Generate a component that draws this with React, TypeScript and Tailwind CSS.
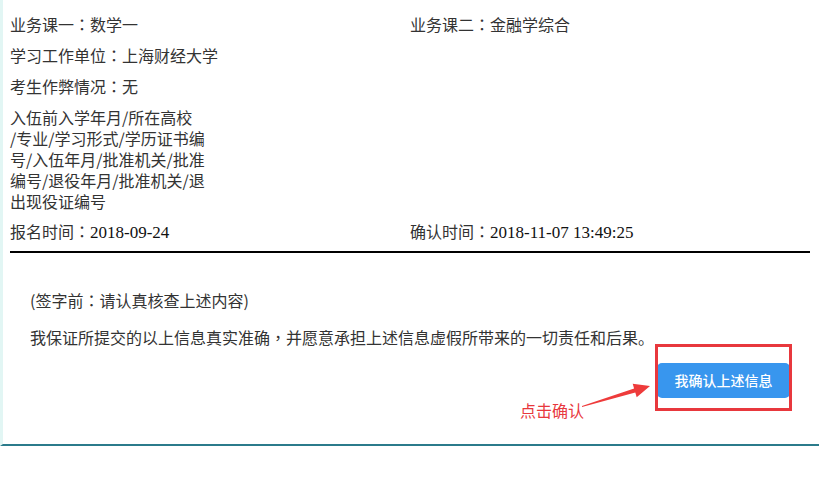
const cjk = { fontFamily: '"Noto Sans CJK SC", "Noto Sans", sans-serif' }

// full-width punctuation centred in its cell, as in the reference
const P = ({ children }: { children: React.ReactNode }) => (
    <span style={{ fontFamily: '"Noto Sans CJK TC", sans-serif' }}>{children}</span>
)

const Row = ({ left, right, className = '' }: { left: React.ReactNode; right?: React.ReactNode; className?: string }) => (
    <div className={`grid grid-cols-[400px_1fr] leading-[21px] ${className}`}>
        <div>{left}</div>
        <div>{right}</div>
    </div>
)

const Num = ({ children }: { children: React.ReactNode }) => (
    <span className="text-[17px] text-[#111]" style={{ fontFamily: '"Liberation Serif", serif' }}>
        {children}
    </span>
)

const App = () => {
    return (
        <div className="relative w-[819px] h-[490px] bg-white overflow-hidden text-[16px] text-[#333]" style={cjk}>
            <div className="h-[446px] border-l-[3px] border-l-[#e2f6f4] border-b-2 border-b-[#2b7b8b] pl-[7px] pt-[14px]">
                <Row left={<>业务课一<P>：</P>数学一</>} right={<>业务课二<P>：</P>金融学综合</>} />
                <Row className="mt-[10px]" left={<>学习工作单位<P>：</P>上海财经大学</>} />
                <Row className="mt-[10px]" left={<>考生作弊情况<P>：</P>无</>} />
                <div className="mt-[10px] leading-[21px]">
                    入伍前入学年月/所在高校
                    <br />
                    /专业/学习形式/学历证书编
                    <br />
                    号/入伍年月/批准机关/批准
                    <br />
                    编号/退役年月/批准机关/退
                    <br />
                    出现役证编号
                </div>
                <Row
                    className="mt-[9px]"
                    left={<>报名时间<P>：</P><Num>2018-09-24</Num></>}
                    right={<>确认时间<P>：</P><Num>2018-11-07 13:49:25</Num></>}
                />
                <div className="mt-[8px] w-[800px] h-[1.5px] bg-black" />

                <div className="pl-[20px] pt-[37px] leading-[21px]">
                    <p>(签字前<P>：</P>请认真核查上述内容)</p>
                    <p className="mt-[16px]">
                        我保证所提交的以上信息真实准确<P>，</P>并愿意承担上述信息虚假所带来的一切责任和后果。
                    </p>
                </div>

                <div className="flex justify-end pr-[29px] mt-[15px]">
                    <div className="relative">
                        <button className="w-[133px] h-[35px] rounded-[5px] bg-[#3896ee] text-white text-[14px] font-medium">
                            我确认上述信息
                        </button>
                        <div className="absolute -left-[2px] -right-[2px] -top-[19px] -bottom-[13px] border-[3px] border-[#e8383d] pointer-events-none" />
                    </div>
                </div>
            </div>

            {/* annotation */}
            <span className="absolute left-[520px] top-[400px] text-[16px] leading-[21px] text-[#e8383d]">点击确认</span>
            <svg className="absolute left-[575px] top-[375px]" width="85" height="40" viewBox="0 0 85 40">
                <polygon
                    points="7,31 59.1,13.6 57.7,8.8 75,11 61.7,22.2 60.3,17.4 7,32"
                    fill="#ee3b3b"
                />
            </svg>
        </div>
    )
}

export default App
